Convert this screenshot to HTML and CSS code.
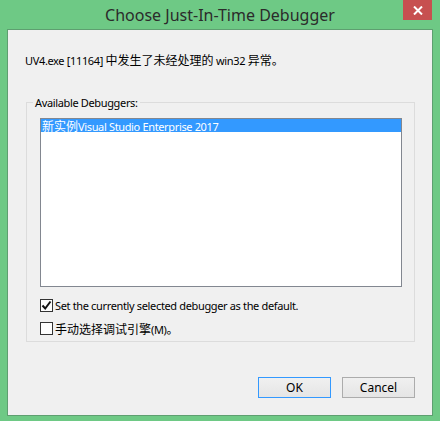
FILE: index.html
```html
<!DOCTYPE html>
<html>
<head>
<meta charset="utf-8">
<link rel="stylesheet" href="styles.css">
</head>
<body>
<div class="window">
  <div class="titlebar">
    <span class="title">Choose Just-In-Time Debugger</span>
    <span class="close">
      <svg width="10" height="9" viewBox="0 0 10 9"><path d="M1 0.5 L9 8.5 M9 0.5 L1 8.5" stroke="#fff" stroke-width="2"/></svg>
    </span>
  </div>
  <div class="client">
    <p class="message">UV4.exe [11164] <span class="cjk">中发生了未经处理的</span> win32 <span class="cjk">异常。</span></p>
    <fieldset class="group">
      <legend class="legend">Available Debuggers:</legend>
      <div class="group-body">
        <div class="listbox">
          <div class="item selected"><span class="cjk">新实例</span>Visual Studio Enterprise 2017</div>
        </div>
        <label class="check-row">
          <span class="box">
            <svg width="11" height="11" viewBox="0 0 11 11"><path d="M1.5 5.5 L4.2 8.5 L9.5 1.5" stroke="#111" stroke-width="2" fill="none"/></svg>
          </span>
          <span class="check-text">Set the currently selected debugger as the default.</span>
        </label>
        <label class="check-row">
          <span class="box"></span>
          <span class="check-text"><span class="cjk">手动选择调试引擎</span>(M)<span class="cjk">。</span></span>
        </label>
      </div>
    </fieldset>
    <div class="buttons">
      <button class="btn btn-default">OK</button>
      <button class="btn">Cancel</button>
    </div>
  </div>
</div>
</body>
</html>
```
FILE: styles.css
```css
html, body {
  margin: 0;
  padding: 0;
}
body {
  background: #6ec985;
  font-family: "Noto Sans", "Noto Sans CJK SC", sans-serif;
  font-size: 11px;
  letter-spacing: -0.35px;
  color: #000;
}
.cjk {
  font-family: "Noto Sans CJK SC", sans-serif;
  font-size: 12px;
  letter-spacing: 0;
}
.window {
  width: 440px;
  height: 421px;
  box-sizing: border-box;
  padding: 0 7px 5px 7px;
  display: flex;
  flex-direction: column;
  position: relative;
}
.titlebar {
  height: 29px;
  display: flex;
  align-items: center;
  justify-content: center;
}
.title {
  font-family: "Noto Sans", sans-serif;
  font-size: 16px;
  letter-spacing: 0;
  color: #2b2b2b;
}
.close {
  position: absolute;
  top: 0;
  left: 403px;
  width: 29px;
  height: 20px;
  background: #c75050;
  display: flex;
  align-items: center;
  justify-content: center;
}
.client {
  flex: 1;
  background: #f0f0f0;
  border: 1px solid #5e9f70;
  display: flex;
  flex-direction: column;
  padding: 0 17px 17px 17px;
}
.message {
  margin: 22px 0 0 0;
  line-height: 16px;
  height: 16px;
  white-space: nowrap;
}
.group {
  margin: 27px 0 0 1px;
  padding: 0;
  border: 1px solid #dcdcdc;
  height: 247px;
  box-sizing: border-box;
  min-width: 0;
}
.legend {
  margin-left: 6px;
  padding: 0 2px;
  line-height: 15px;
}
.group-body {
  padding: 8px 12px 0 13px;
}
.listbox {
  height: 169px;
  box-sizing: border-box;
  border: 1px solid #828790;
  background: #fff;
}
.item {
  height: 13px;
  line-height: 13px;
  padding-left: 1px;
  white-space: nowrap;
}
.selected {
  background: #3399ff;
  color: #fff;
}
.check-row {
  display: flex;
  align-items: center;
  height: 13px;
  margin-top: 12px;
  white-space: nowrap;
}
.check-row + .check-row {
  margin-top: 10px;
}
.box {
  width: 13px;
  height: 13px;
  box-sizing: border-box;
  border: 1px solid #333;
  background: #fdfdfd;
  display: flex;
  align-items: center;
  justify-content: center;
  margin-right: 2px;
  flex: none;
}
.buttons {
  margin-top: auto;
  display: flex;
  justify-content: flex-end;
  gap: 11px;
}
.btn {
  width: 73px;
  height: 21px;
  box-sizing: border-box;
  border: 1px solid #acacac;
  background: linear-gradient(#f0f0f0, #e5e5e5);
  font-family: "Noto Sans", sans-serif;
  font-size: 12px;
  letter-spacing: 0;
  color: #000;
  padding: 0;
  line-height: 19px;
}
.btn-default {
  border-color: #3399ff;
}
```
